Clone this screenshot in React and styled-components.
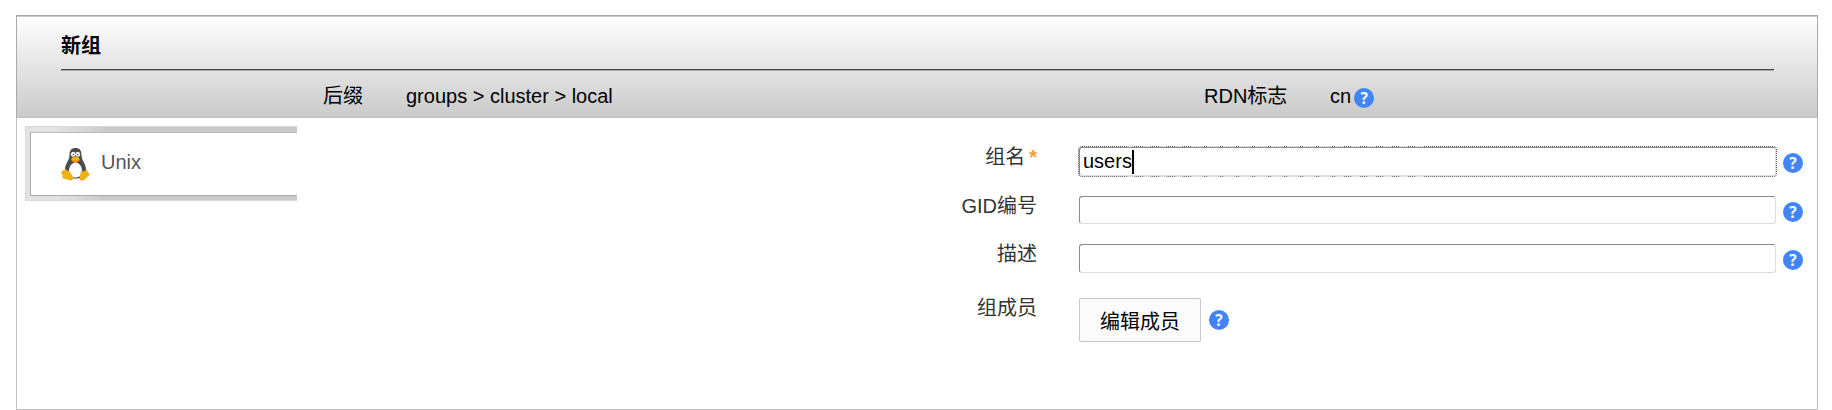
import React from 'react';
import styled, { createGlobalStyle, css } from 'styled-components';

const Global = createGlobalStyle`
  * { box-sizing: border-box; }
  body {
    margin: 0;
    background: #fff;
    color: #000;
    font: 20px/24px "Liberation Sans", "Noto Sans CJK SC", sans-serif;
    overflow: hidden;
  }
`;

const Panel = styled.main`
  width: 1802px;
  height: 395px;
  margin: 15px 0 0 16px;
  border: 1px solid #c0c0c0;
  border-top: 0;
`;

const Header = styled.header`
  height: 103px;
  margin: 0 -1px;
  padding: 18px 43px 0 44px;
  border: 1px solid #aaa;
  border-bottom-color: #c0c0c0;
  background: linear-gradient(#fff, #cacaca);
  box-shadow: inset 0 1px #ccc;
`;

const Title = styled.h1`
  height: 35px;
  margin: 0;
  font-size: 20px;
  line-height: 24px;
  font-weight: 700;
`;

const Rule = styled.hr`
  height: 2px;
  margin: 0;
  border: 0;
  border-top: 1px solid #444;
  background: #aaa;
`;

const Meta = styled.div`
  display: grid;
  grid-template-columns: 302px 43px 798px 126px auto;
  align-items: start;
  padding-top: 13px;
`;

const MetaLabel = styled.span`
  text-align: ${p => p.$align || 'left'};
`;

const MetaValue = styled.div`
  display: flex;
  gap: 3px;
`;

const Path = styled.span`
  grid-column: 3;
`;

const Body = styled.div`
  display: flex;
  justify-content: space-between;
  padding: 8px 14px 0 8px;
`;

const TabFrame = styled.div`
  width: 272px;
  height: 75px;
  padding: 5px 0 4px 4px;
  border: 1px solid #d8d8d8;
  border-right: 0;
  background: linear-gradient(90deg, #e2e2e2 30px, #cacaca 80px);
`;

const Tab = styled.div`
  display: flex;
  align-items: center;
  gap: 11px;
  height: 64px;
  padding-left: 30px;
  border: 1px solid #aaa;
  border-top-color: #bbb;
  border-right: 0;
  background: #fff;
  color: #555;
`;

const TabName = styled.span`
  padding-bottom: 4px;
`;

const Form = styled.div`
  display: grid;
  grid-template-rows: 49px 48px 54px 50px;
  padding-top: 18px;
`;

const Field = styled.div`
  display: grid;
  grid-template-columns: 120px 724px;
  column-gap: 42px;
  align-items: start;
`;

const Label = styled.label`
  padding-top: 1px;
  color: #333;
  text-align: right;
  white-space: nowrap;
`;

const Required = styled.span`
  margin-left: 4px;
  color: #fa9a3c;
  font-weight: 700;
`;

const Control = styled.div`
  display: flex;
  gap: ${p => p.$gap || 7}px;
`;

const focusRing = css`
  outline: 1px dotted #555;
  &::before,
  &::after {
    content: '';
    position: absolute;
    left: 48px;
    right: 342px;
    height: 1px;
    background:
      repeating-linear-gradient(90deg, rgba(255, 255, 255, 0.65) 0 6px, transparent 6px 16px) 0 0 / 64px 1px no-repeat,
      repeating-linear-gradient(90deg, rgba(255, 255, 255, 0.65) 0 11px, transparent 11px 16px) 64px 0 / 144px 1px no-repeat,
      repeating-linear-gradient(90deg, rgba(255, 255, 255, 0.65) 0 7px, transparent 7px 16px) 208px 0 / 96px 1px no-repeat;
  }
  &::before { top: -2px; }
  &::after { bottom: -2px; }
`;

const Input = styled.div`
  position: relative;
  display: flex;
  align-items: center;
  width: 697px;
  height: ${p => p.$height || 28}px;
  margin-top: 3px;
  padding-left: 3px;
  border: 1px solid #ddd;
  border-top-color: #8a8a8a;
  border-left-color: #8a8a8a;
  border-radius: 3px;
  ${p => p.$focused && focusRing}
`;

const Value = styled.span`
  padding-bottom: 2px;
`;

const Caret = styled.i`
  width: 2px;
  height: 24px;
  background: #000;
`;

const Button = styled.button`
  width: 122px;
  height: 44px;
  margin-top: 3px;
  padding: 3px 0 0;
  border: 1px solid #c8c8c8;
  border-radius: 2px;
  background: #fbfbfb;
  color: #000;
  font: inherit;
`;

const HelpBadge = styled.span`
  display: flex;
  justify-content: center;
  flex: none;
  width: 20px;
  height: 20px;
  margin-top: ${p => p.$top}px;
  border-radius: 50%;
  background: #4285f8;
  color: #f4f8ff;
  font: 700 15.5px/21px "Open Sans", sans-serif;
`;

const Help = ({ top }) => <HelpBadge $top={top}>?</HelpBadge>;

const Penguin = () => (
  <svg width="29" height="33" viewBox="0 0 29 33">
    <path d="M14.5 0C10.4 0 8.500 2.500 8.500 7c0 6-4.500 8-4.500 15 0 6 5 8.500 10.500 8.500S25 28 25 22c0-7-4.500-9-4.500-15 0-4.500-1.900-7-6-7Z" fill="#4b4b4b" />
    <path d="M14.5 14C11 15 8 18 8 23c0 4.500 3 6.500 6.500 6.500S21 27.500 21 23c0-5-3-8-6.500-9Z" fill="#fff" />
    <ellipse cx="12.200" cy="6.300" rx="2.300" ry="2.500" fill="#fff" />
    <ellipse cx="16.800" cy="6.300" rx="2.300" ry="2.500" fill="#fff" />
    <circle cx="12.400" cy="6.500" r="0.800" fill="#444" />
    <circle cx="16.600" cy="6.500" r="0.800" fill="#444" />
    <path d="M10.300 11c1-3 7.400-3 8.400 0 0 2-2 3.500-4.200 3.500S10.300 13 10.300 11Z" fill="#f4b400" />
    <path d="M10.800 12q3.700 1.400 7.400 0-1.200 2.600-3.700 2.600T10.800 12Z" fill="#f57c00" />
    <path d="M0 25l1.500-2.500L5 21.500l3.500 2 4 6q-.5 3-3 3L1 30l.7-2.500Z" fill="#edb20e" />
    <path d="M20 23l2.500.5L26 21.500l1 3 2 2-6.500 6h-3l-1-1.500Z" fill="#edb20e" />
  </svg>
);

export default function App() {
  return (
    <>
      <Global />
      <Panel>
        <Header>
          <Title>新组</Title>
          <Rule />
          <Meta>
            <MetaLabel $align="right">后缀</MetaLabel>
            <Path>groups &gt; cluster &gt; local</Path>
            <MetaLabel>RDN标志</MetaLabel>
            <MetaValue>cn<Help top={4} /></MetaValue>
          </Meta>
        </Header>
        <Body>
          <TabFrame>
            <Tab><Penguin /><TabName>Unix</TabName></Tab>
          </TabFrame>
          <Form>
            <Field>
              <Label>组名<Required>*</Required></Label>
              <Control><Input $height={29} $focused><Value>users</Value><Caret /></Input><Help top={9} /></Control>
            </Field>
            <Field>
              <Label>GID编号</Label>
              <Control><Input /><Help top={9} /></Control>
            </Field>
            <Field>
              <Label>描述</Label>
              <Control><Input $height={29} /><Help top={9} /></Control>
            </Field>
            <Field>
              <Label>组成员</Label>
              <Control $gap={8}><Button>编辑成员</Button><Help top={15} /></Control>
            </Field>
          </Form>
        </Body>
      </Panel>
    </>
  );
}
